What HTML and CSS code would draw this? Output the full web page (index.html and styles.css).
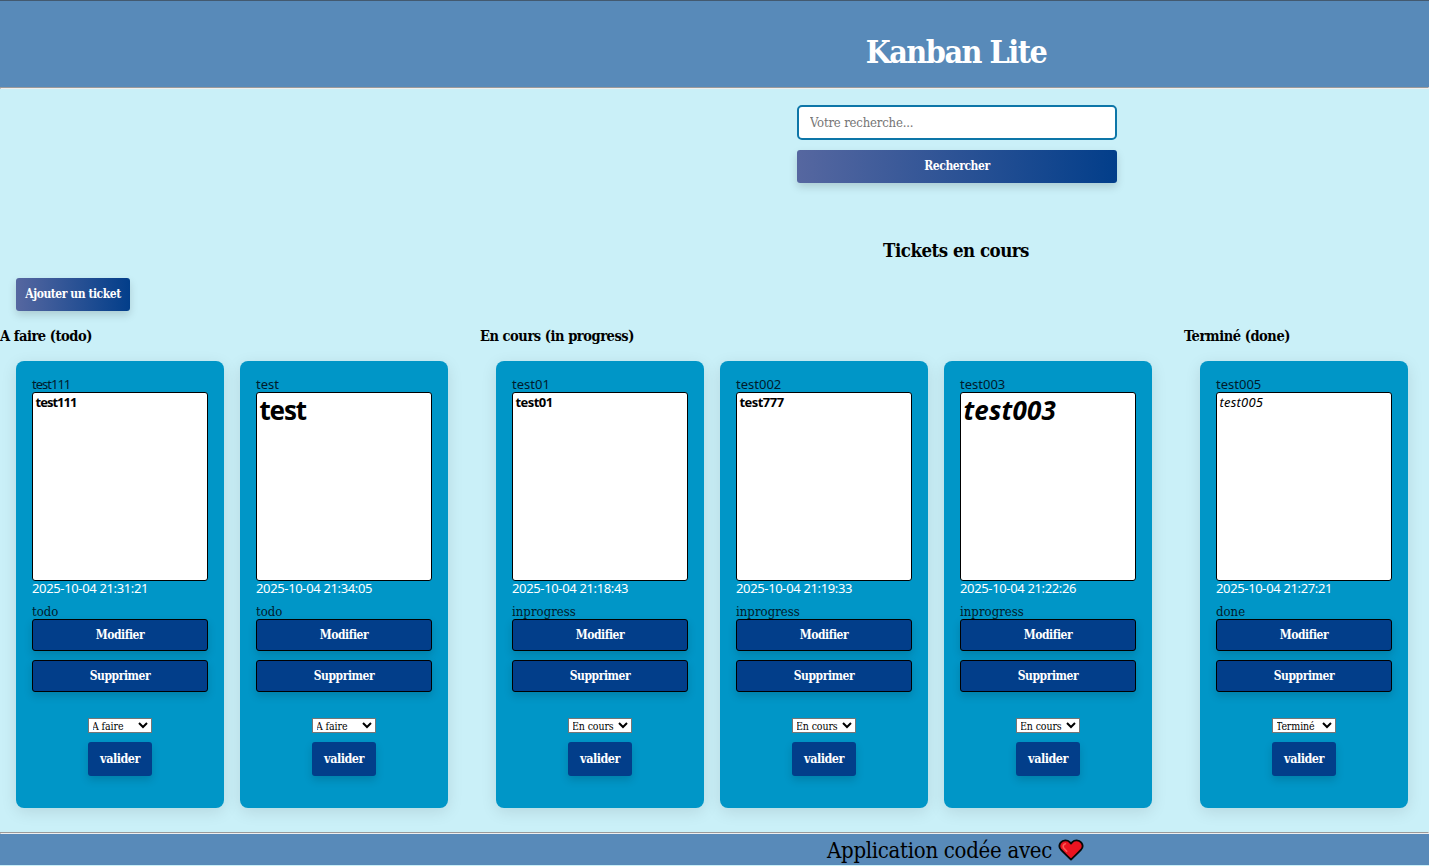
FILE: index.html
```
<!DOCTYPE html>
<html lang="fr">
<head>
<meta charset="utf-8">
<title>Kanban Lite</title>
<link rel="stylesheet" href="styles.css">
</head>
<body>
<div class="page">
  <header class="header"><h1 class="title">Kanban Lite</h1></header>
  <hr class="rule">
  <main class="main">
    <form class="search">
      <input class="search-input" type="text" placeholder="Votre recherche...">
      <button class="btn search-btn" type="button">Rechercher</button>
    </form>
    <h2 class="subtitle">Tickets en cours</h2>
    <button class="btn add-btn" type="button">Ajouter un ticket</button>
    <div class="board" id="board"></div>
  </main>
  <hr class="rule">
  <footer class="footer">
    <span class="credit">Application codée avec</span>
    <svg class="heart" viewBox="0 0 26 22"><path d="M13 20.6C9.500 17 5.500 13.500 2.700 10.300 1.100 8.300 1.200 5.500 2.700 3.600 5 .8 9.500.8 11.700 3.200L13 4.600l1.300-1.400C16.500.8 21 .8 23.300 3.600 24.800 5.500 24.900 8.300 23.300 10.300 20.500 13.500 16.500 17 13 20.600Z" fill="#eb1420" stroke="#080808" stroke-width="1.8" stroke-linejoin="round"/><path d="M7.400 4.800C5.300 5.300 4.700 7.200 5.500 8.900L8.700 12.300" fill="none" stroke="#fb5a55" stroke-width="1.600" stroke-linecap="round"/></svg>
  </footer>
</div>
<script src="board.js"></script>
</body>
</html>
```
FILE: styles.css
```
* { box-sizing: border-box; }
body {
  margin: 0;
  overflow: hidden;
  background: #caf0f8;
  font-family: "DejaVu Serif Condensed", "DejaVu Serif", serif;
  font-stretch: condensed;
  font-size: 12.5px;
  color: #000;
}
.page { height: 866px; display: flex; flex-direction: column; }
.header {
  height: 87px;
  border-top: 1px solid #43596f;
  background: #588ab9;
  display: flex;
  justify-content: center;
  padding: 31px 0 0 483px;
}
.title { margin: 0; font-size: 32px; line-height: 40px; color: #fff; letter-spacing: -1.5px; }
.rule { width: 100%; height: 2px; margin: 0; border: 1px inset #eee; flex: none; }
.main { height: 743px; flex: none; display: flex; flex-direction: column; }
.search { width: 320px; margin: 16px 0 0 797px; display: flex; flex-direction: column; gap: 10px; }
.search-input {
  height: 35px;
  padding: 0 11px;
  border: 2px solid #0d76a8;
  border-radius: 5px;
  font: inherit;
  font-size: 13px;
  letter-spacing: -0.18px;
}
.search-input::placeholder { color: #757575; }
.btn {
  height: 33px;
  padding: 0 0 2px;
  border: 0;
  border-radius: 3px;
  background: linear-gradient(to right, #5667a0, #023e8a);
  box-shadow: 0 4px 8px rgba(0, 0, 0, .15);
  color: #fff;
  font: inherit;
  font-size: 12px;
  font-weight: bold;
  letter-spacing: -0.45px;
  white-space: nowrap;
}
.subtitle { margin: 55px 0 0; padding-left: 483px; text-align: center; font-size: 18.5px; line-height: 26px; letter-spacing: -0.5px; }
.add-btn { width: 114px; margin: 14px 0 0 16px; }
.board { display: flex; gap: 16px; margin-top: 16px; }
.column { flex: none; }
.column-title { margin: 0; font-size: 14.5px; line-height: 18px; letter-spacing: -0.45px; white-space: nowrap; }
.cards { display: flex; gap: 16px; padding: 16px; }
.card {
  width: 208px;
  height: 447px;
  padding: 16px;
  border-radius: 8px;
  background: #0096c7;
  box-shadow: 0 4px 16px rgba(0, 0, 0, .1);
  display: flex;
  flex-direction: column;
}
.name, .date, .status { line-height: 15px; height: 15px; color: #001b2c; }
.name, .date, .note { font-family: "Noto Sans", sans-serif; }
.name { font-size: 13px; }
.note {
  height: 189px;
  padding: 1px 2.5px;
  border: 1px solid #000;
  border-radius: 3px;
  background: #fff;
  font-size: 13px;
  line-height: 16px;
}
.note-bold { font-weight: bold; letter-spacing: -0.55px; }
.note-big { font-size: 26px; line-height: 33px; font-weight: bold; letter-spacing: -1.2px; }
.note-italic { font-style: italic; letter-spacing: 0.2px; }
.tight { letter-spacing: -1px; }
.date { color: #fff; font-size: 13px; letter-spacing: -0.35px; }
.status { margin-top: 8px; font-size: 13px; letter-spacing: 0.05px; }
.card-btn {
  height: 32px;
  margin-bottom: 9px;
  padding-bottom: 0;
  background: #023e8a;
  border: 1px solid #000;
}
.move { display: flex; flex-direction: column; align-items: center; gap: 9px; padding-top: 17px; }
.select {
  width: 64px;
  height: 15px;
  padding: 0;
  border: 1px solid #767676;
  border-radius: 0;
  background-color: #fff;
  color: #000;
  font: inherit;
  font-size: 10.5px;
  letter-spacing: -0.1px;
  text-indent: -1px;
}
.move-btn { width: 64px; height: 34px; background: #023e8a; font-size: 12.5px; letter-spacing: -0.5px; }
.footer {
  height: 31px;
  background: #588ab9;
  display: flex;
  justify-content: center;
  align-items: center;
  gap: 6px;
  padding-left: 482px;
}
.credit { padding-top: 3px; font-size: 22px; line-height: 28px; letter-spacing: -0.3px; white-space: nowrap; }
.heart { width: 26px; height: 22px; flex: none; }
```
FILE: board.js
```
const columns = [
  { title: "A faire (todo)", status: "todo", option: "A faire", cards: [
    ["test111", "test111", "note-bold tight", "2025-10-04 21:31:21"],
    ["test", "test", "note-big", "2025-10-04 21:34:05"]
  ] },
  { title: "En cours (in progress)", status: "inprogress", option: "En cours", cards: [
    ["test01", "test01", "note-bold", "2025-10-04 21:18:43"],
    ["test002", "test777", "note-bold", "2025-10-04 21:19:33"],
    ["test003", "test003", "note-big note-italic", "2025-10-04 21:22:26"]
  ] },
  { title: "Terminé (done)", status: "done", option: "Terminé", cards: [
    ["test005", "test005", "note-italic", "2025-10-04 21:27:21"]
  ] }
];

const options = selected => columns
  .map(c => `<option${c.option === selected ? " selected" : ""}>${c.option}</option>`).join("");

document.getElementById("board").innerHTML = columns.map(c => `
  <section class="column">
    <h3 class="column-title">${c.title}</h3>
    <div class="cards">${c.cards.map(([name, note, style, date]) => `
      <article class="card">
        <div class="name${name.endsWith("111") ? " tight" : ""}">${name}</div>
        <div class="note ${style}">${note}</div>
        <div class="date">${date}</div>
        <div class="status">${c.status}</div>
        <button class="btn card-btn" type="button">Modifier</button>
        <button class="btn card-btn" type="button">Supprimer</button>
        <div class="move">
          <select class="select">${options(c.option)}</select>
          <button class="btn move-btn" type="button">valider</button>
        </div>
      </article>`).join("")}
    </div>
  </section>`).join("");
```
